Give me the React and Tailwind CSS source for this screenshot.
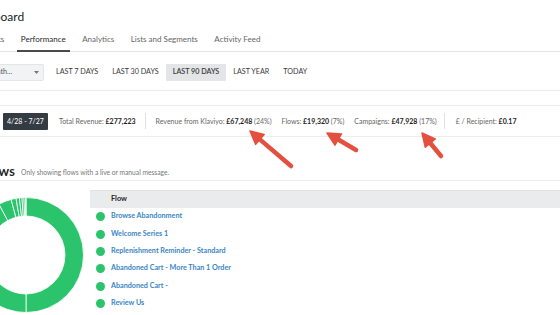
import React from "react";

const tabs = ["Highlights", "Performance", "Analytics", "Lists and Segments", "Activity Feed"];
const ranges = ["LAST 7 DAYS", "LAST 30 DAYS", "LAST 90 DAYS", "LAST YEAR", "TODAY"];
const flows = [
    "Browse Abandonment",
    "Welcome Series 1",
    "Replenishment Reminder - Standard",
    "Abandoned Cart - More Than 1 Order",
    "Abandoned Cart -",
    "Review Us",
];

// donut slices in degrees, clockwise from 12 o'clock
const slices = [
    [0, 180],
    [180, 332],
    [332, 345],
    [345, 350],
    [350, 353.4],
    [353.4, 356],
    [356, 358],
    [358, 359.5],
    [359.5, 360],
];

const polar = (cx, cy, r, deg) => {
    const a = ((deg - 90) * Math.PI) / 180;
    return [cx + r * Math.cos(a), cy + r * Math.sin(a)];
};

const slicePath = (cx, cy, R, r, a0, a1) => {
    const large = a1 - a0 > 180 ? 1 : 0;
    const [x0, y0] = polar(cx, cy, R, a0);
    const [x1, y1] = polar(cx, cy, R, a1);
    const [x2, y2] = polar(cx, cy, r, a1);
    const [x3, y3] = polar(cx, cy, r, a0);
    return `M${x0} ${y0} A${R} ${R} 0 ${large} 1 ${x1} ${y1} L${x2} ${y2} A${r} ${r} 0 ${large} 0 ${x3} ${y3} Z`;
};

const Donut = () => (
    <svg width="116" height="116" viewBox="0 0 116 116" className="block shrink-0">
        {slices.map(([a0, a1], i) => (
            <path key={i} d={slicePath(58, 58, 57.5, 39, a0, a1)} fill="#2bc46d" stroke="#ffffff" strokeWidth="0.8" />
        ))}
    </svg>
);

const Arrow = ({ x1, y1, x2, y2 }) => {
    // x1,y1 = tail, x2,y2 = tip
    const dx = x2 - x1;
    const dy = y2 - y1;
    const len = Math.hypot(dx, dy);
    const ux = dx / len;
    const uy = dy / len;
    const head = 13;
    const bx = x2 - ux * head;
    const by = y2 - uy * head;
    const px = -uy * 6.5;
    const py = ux * 6.5;
    return (
        <g>
            <line x1={x1} y1={y1} x2={bx + ux * 2} y2={by + uy * 2} stroke="#e4503f" strokeWidth="4.5" strokeLinecap="round" />
            <polygon points={`${x2},${y2} ${bx + px},${by + py} ${bx - px},${by - py}`} fill="#e4503f" strokeLinejoin="round" stroke="#e4503f" strokeWidth="1.5" />
        </g>
    );
};

const Stat = ({ label, value, pct }) => (
    <span className="whitespace-nowrap">
        {label} <b className="font-bold text-[#1f1f1f]">{value}</b>
        {pct && <span> {pct}</span>}
    </span>
);

export default function App() {
    return (
        <div className="relative w-[560px] h-[315px] overflow-hidden bg-white text-[#333]" style={{ fontFamily: "Lato, 'Open Sans', sans-serif" }}>
            {/* Title */}
            <div className="h-[30px] pt-[9px] -ml-[33px] text-[12px] leading-[16px] text-[#222] whitespace-nowrap">Dashboard</div>

            {/* Tabs */}
            <div className="flex items-end h-[22px] border-b border-[#e6e6e6] -ml-[35px] text-[8px] whitespace-nowrap">
                {tabs.map((t, i) => (
                    <div
                        key={t}
                        className={`px-[4px] pb-[5px] mr-[8.5px] border-b-[2px] -mb-[1px] leading-[11px] ${
                            i === 1 ? "border-[#4a4a4a] text-[#2a2a2a]" : "border-transparent text-[#666]"
                        }`}
                    >
                        {t}
                    </div>
                ))}
            </div>

            {/* Date filters */}
            <div className="flex items-center h-[39px] pt-[2px] border-b border-[#ececec] text-[7.2px] whitespace-nowrap">
                <div className="flex items-center justify-between w-[80px] h-[17px] -ml-[36px] mr-[5px] pl-[6px] pr-[4px] bg-[#f2f3f4] border border-[#e4e5e6] rounded-[2px] text-[#555]">
                    <span>This Month...</span>
                    <svg width="5" height="3" viewBox="0 0 5 3"><path d="M0 0h5L2.5 3z" fill="#777" /></svg>
                </div>
                {ranges.map((r, i) => (
                    <div key={r} className={`h-[17px] flex items-center px-[7px] rounded-[1px] text-[#3a3a3a] ${i === 2 ? "bg-[#e3e5e7] font-semibold" : ""}`}>
                        {r}
                    </div>
                ))}
            </div>

            {/* Stats */}
            <div className="flex items-center h-[32px] mt-[14px] border-y border-[#ececec] text-[7px] text-[#666] whitespace-nowrap">
                <div className="ml-[3px] px-[4px] h-[17px] flex items-center bg-[#353b43] text-white rounded-[1px] text-[7px]">4/28 - 7/27</div>
                <div className="ml-[11px] pr-[9px] border-r border-[#e0e0e0] h-[16px] flex items-center">
                    <Stat label="Total Revenue:" value="£277,223" />
                </div>
                <div className="ml-[10px] flex items-center gap-[10px]">
                    <Stat label="Revenue from Klaviyo:" value="£67,248" pct="(24%)" />
                    <Stat label="Flows:" value="£19,320" pct="(7%)" />
                    <Stat label="Campaigns:" value="£47,928" pct="(17%)" />
                </div>
                <div className="ml-[7px] pl-[11px] border-l border-[#e0e0e0] h-[16px] flex items-center">
                    <Stat label="£ / Recipient:" value="£0.17" />
                </div>
            </div>

            {/* Flows header */}
            <div className="flex items-end h-[44px] pb-[1px] border-b border-[#ececec] -ml-[21px] whitespace-nowrap">
                <span className="text-[10px] leading-[13px] font-black tracking-[0.3px] text-[#222]">FLOWS</span>
                <span className="ml-[6px] mb-[2px] text-[6.7px] leading-[9px] text-[#777]">Only showing flows with a live or manual message.</span>
            </div>

            {/* Flows content */}
            <div className="flex items-start mt-[9px]">
                <div className="-ml-[32px] mt-[7px]">
                    <Donut />
                </div>
                <div className="ml-[6px] flex-1">
                    <div className="h-[18px] flex items-center pl-[21px] bg-[#e9ebed] border-t border-[#e0e2e4] text-[7.3px] font-bold text-[#1f1f1f]">Flow</div>
                    {flows.map((f) => (
                        <div key={f} className="h-[17.4px] flex items-center pl-[6px] whitespace-nowrap">
                            <span className="w-[9px] h-[9px] rounded-full bg-[#2bc46d] shrink-0" />
                            <span className="ml-[6px] text-[7.2px] font-bold text-[#3a86c4]">{f}</span>
                        </div>
                    ))}
                </div>
            </div>

            {/* Annotation arrows */}
            <svg className="absolute inset-0 pointer-events-none" width="560" height="315">
                <Arrow x1={291} y1={166} x2={250} y2={131} />
                <Arrow x1={356} y1={150} x2={327} y2={133} />
                <Arrow x1={441} y1={156} x2={422} y2={133} />
            </svg>
        </div>
    );
}
